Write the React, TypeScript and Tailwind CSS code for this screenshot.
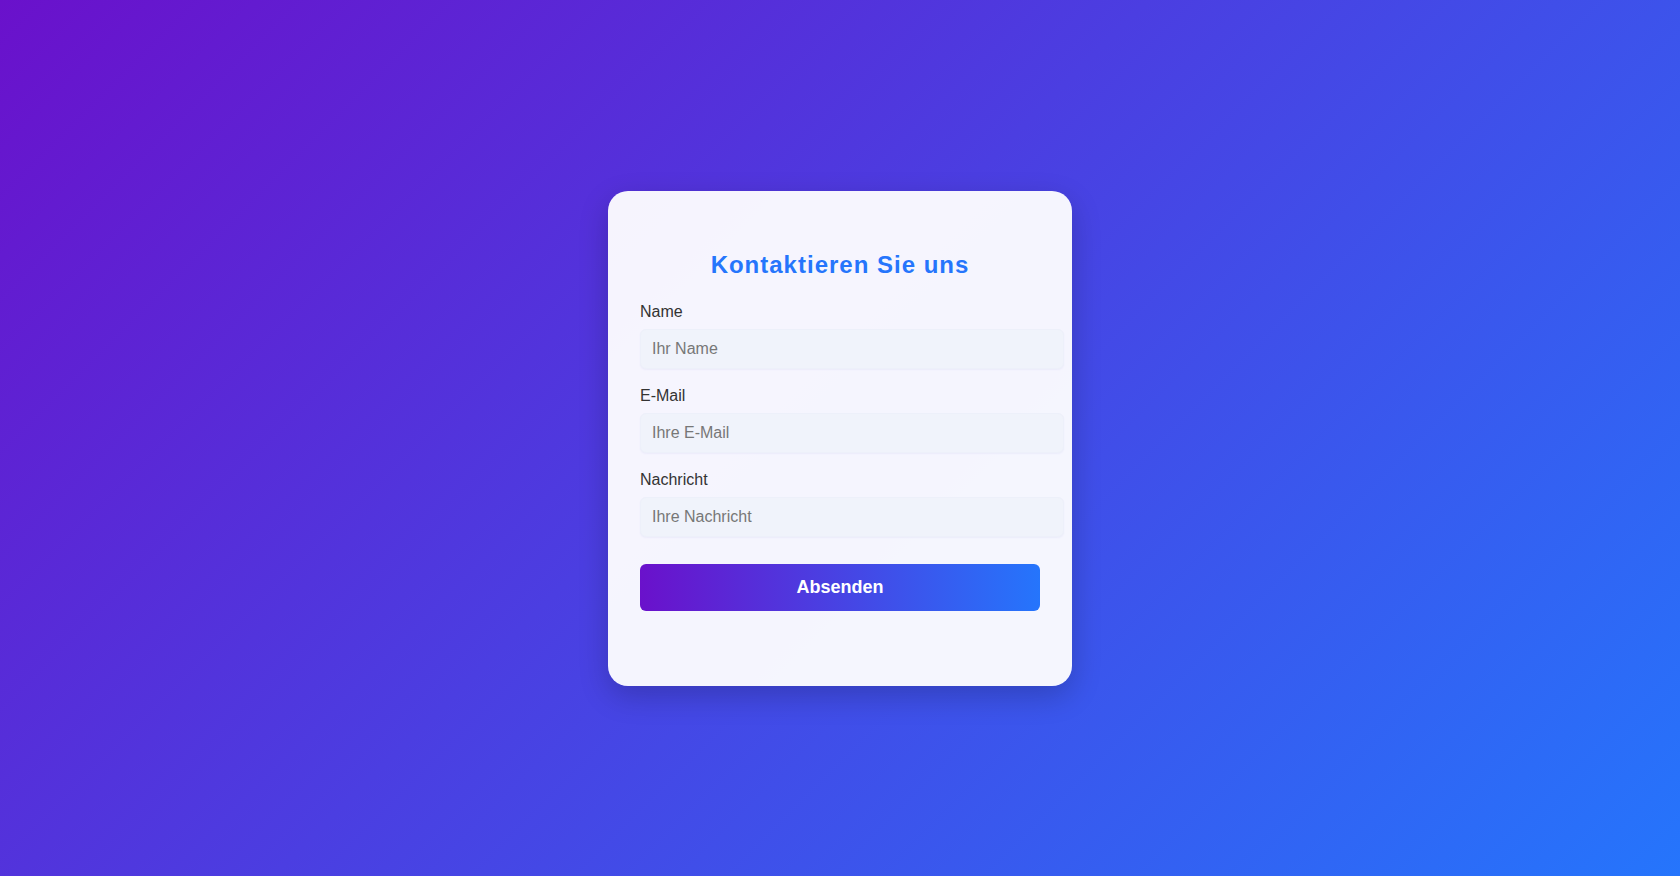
import React from "react";

const fields = [
  { id: "name", label: "Name", placeholder: "Ihr Name", type: "text" },
  { id: "email", label: "E-Mail", placeholder: "Ihre E-Mail", type: "email" },
  { id: "message", label: "Nachricht", placeholder: "Ihre Nachricht", type: "text" },
];

export default function App() {
  return (
    <div
      className="min-h-screen w-full flex items-center justify-center bg-[linear-gradient(135deg,#6a11cb,#2575fc)]"
      style={{ fontFamily: '"Liberation Sans", Arial, sans-serif' }}
    >
      {/* Contact card */}
      <div className="w-[464px] rounded-[20px] bg-white/95 px-8 pt-[59px] pb-[75px] shadow-[0_10px_30px_rgba(0,0,0,0.2)]">
        <h2 className="text-center text-[24px] leading-[30px] font-bold tracking-[1px] text-[#2575fc] mb-[23px]">
          Kontaktieren Sie uns
        </h2>
        <form onSubmit={(e) => e.preventDefault()}>
          {fields.map((f) => (
            <div key={f.id} className="mb-[18px]">
              <label
                htmlFor={f.id}
                className="block text-[16px] leading-[18px] text-[#333] mb-2"
              >
                {f.label}
              </label>
              <input
                id={f.id}
                type={f.type}
                placeholder={f.placeholder}
                className="box-content block w-full h-[18px] py-[10px] px-[11px] text-[16px] leading-[18px] text-[#333] placeholder:text-[#777] bg-[#f0f3fb] border border-[#edf0fa] rounded-[6px] shadow-[0_1px_2px_rgba(80,90,200,0.06)] outline-none"
              />
            </div>
          ))}
          {/* margin collapses with the last field's mb */}
          <button
            type="submit"
            className="mt-[27px] block w-full h-[47px] border-0 rounded-[6px] bg-[linear-gradient(to_right,#6a11cb,#2575fc)] text-white text-[18px] leading-[47px] font-bold"
          >
            Absenden
          </button>
        </form>
      </div>
    </div>
  );
}
